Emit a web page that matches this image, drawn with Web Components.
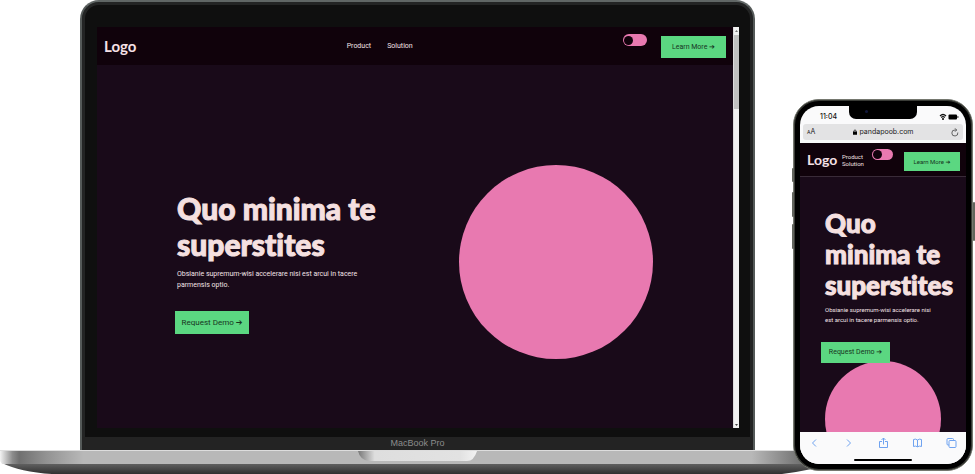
<!DOCTYPE html>
<html lang="en">
<head>
<meta charset="utf-8">
<meta name="viewport" content="width=device-width, initial-scale=1">
<title>Device showcase</title>
<style>
body { margin: 0; background: #fff; font-family: Roboto, "Liberation Sans", sans-serif; }
</style>
</head>
<body>
<device-showcase></device-showcase>
<script>
const define = (name, html) => {
  const template = document.createElement('template');
  template.innerHTML = '<style>*{box-sizing:border-box}:host{box-sizing:border-box}</style>' + html;
  customElements.define(name, class extends HTMLElement {
    constructor() {
      super();
      this.attachShadow({ mode: 'open' }).append(template.content.cloneNode(true));
    }
  });
};

define('action-button', `
<style>
:host { display: block; }
button { display: block; width: 100%; height: 100%; padding: 0; border: 0; background: #5bd781; color: #17351f;
  font: inherit; line-height: 1; white-space: nowrap; cursor: pointer; }
.arrow { font-family: "DejaVu Sans", sans-serif; }
</style>
<button type="button"><slot></slot> <span class="arrow">➔</span></button>`);

define('theme-toggle', `
<style>
:host { display: block; width: var(--toggle-w, 24px); height: var(--toggle-h, 12px); }
input { appearance: none; display: flex; align-items: center; width: 100%; height: 100%; margin: 0; padding: 0 1px;
  border-radius: 12px; background: #e879b0; cursor: pointer; }
input::before { content: ""; height: 9px; width: 9px; border-radius: 50%; background: #10020b; }
input:checked { justify-content: flex-end; }
</style>
<input type="checkbox" role="switch" aria-label="Switch theme">`);

define('site-header', `
<style>
:host { display: flex; align-items: center; justify-content: space-between; height: 38px; padding: 0 7px; background: #10020b; color: #f3e3e6; font-size: 7px; }
.logo { font: 700 15px/1 Lato, sans-serif; color: #f5e0e6; text-decoration: none; }
nav { display: flex; gap: 16px; line-height: 8px; }
nav a { color: inherit; text-decoration: none; }
.actions { align-self: stretch; display: flex; align-items: flex-start; gap: 14px; }
theme-toggle { margin-top: 7px; }
action-button { width: 65px; height: 22px; margin-top: 9px; }
:host([compact]) { height: 34px; padding: 0 6px 0 7px; border-bottom: 1px solid #392b38; font-size: 6px; --toggle-w: 21px; --toggle-h: 11px; }
:host([compact]) .logo { width: 35px; font-size: 14px; }
:host([compact]) nav { flex-direction: column; gap: 0; line-height: 7px; width: 30px; }
:host([compact]) .actions { flex: 1; justify-content: space-between; gap: 0; }
:host([compact]) theme-toggle { margin-top: 6px; }
:host([compact]) action-button { width: 56px; height: 19px; margin-top: 9px; }
</style>
<a class="logo" href="#">Logo</a>
<nav><a href="#product">Product</a><a href="#solution">Solution</a></nav>
<div class="actions"><theme-toggle></theme-toggle><action-button>Learn More</action-button></div>`);

define('hero-section', `
<style>
:host { display: flex; flex: 1; justify-content: space-between; align-items: flex-start; padding: 100px 80px 0; background: #190a19; color: #f3e3e6; }
.copy { width: 200px; padding-top: 25px; }
h1 { margin: 0; font: 900 30px/36px Lato, sans-serif; font-variant-ligatures: none; color: #f5e0e0; white-space: nowrap; -webkit-text-stroke: 1px; }
p { margin: 7px 0 0; font-size: 7px; line-height: 11px; white-space: nowrap; }
.narrow { display: none; }
action-button { width: 74px; height: 23px; margin: 20px 0 0 -2px; font-size: 8px; }
.disc { width: 194px; aspect-ratio: 1; border-radius: 50%; background: #e879b0; }
:host([compact]) { flex-direction: column; justify-content: flex-start; min-height: 0; padding: 31px 0 0 25px; overflow: hidden; }
:host([compact]) .copy { width: auto; padding: 0; position: relative; z-index: 1; }
:host([compact]) h1 { font-size: 26px; line-height: 31px; }
:host([compact]) p { margin-top: 4px; font-size: 6px; line-height: 10px; }
:host([compact]) .narrow { display: inline; }
:host([compact]) .wide { display: none; }
:host([compact]) action-button { width: 69px; height: 21px; margin: 17px 0 -2px -4px; font-size: 7px; }
:host([compact]) .disc { width: 116px; flex: none; }
</style>
<div class="copy">
<h1>Quo <br class="narrow">minima te<br>superstites</h1>
<p>Obsianie supremum-wisi accelerare nisi <br class="narrow">est arcui in tacere <br class="wide">parmensis optio.</p>
<action-button>Request Demo</action-button>
</div>
<div class="disc"></div>`);

define('scroll-track', `
<style>
:host { display: flex; flex-direction: column; width: 6px; background: #f1f1f1; border-left: 1px solid #ddd; }
svg { width: 5px; height: 8px; }
.thumb { height: 74px; background: #c1c1c1; }
.space { flex: 1; }
</style>
<svg viewBox="0 0 5 8"><path d="M1 5 2.500 3 4 5z" fill="#777"/></svg><div class="thumb"></div><div class="space"></div>
<svg viewBox="0 0 5 8"><path d="M1 4 2.500 6 4 4z" fill="#444"/></svg>`);

define('laptop-lid', `
<style>
:host { display: flex; flex-direction: column; height: 450px; padding: 22px 0 0; background: #0f0f0f; border: 2px solid #555a59; border-top-color: #606665; border-bottom: 0;
  border-radius: 19px 19px 0 0; box-shadow: inset 0 0 0 3px #232424; }
.screen { display: flex; height: 401px; margin: 3px 14px 0 15px; }
.page { flex: 1; min-width: 0; display: flex; flex-direction: column; }
.chin { display: flex; align-items: center; justify-content: center; margin-top: 9px; height: 13px; background: #232323; color: #8c8c8c;
  font: 9px/13px "Liberation Sans", sans-serif; }
</style>
<div class="screen"><div class="page"><slot></slot></div><scroll-track></scroll-track></div>
<div class="chin">MacBook Pro</div>`);

define('laptop-base', `
<style>
:host { display: block; height: 24px; }
svg { display: block; width: 100%; height: 24px; }
</style>
<svg viewBox="0 0 975 24" preserveAspectRatio="none" aria-hidden="true">
<defs>
<linearGradient id="deck"><stop offset="0" stop-color="#f4f4f4"/><stop offset=".015" stop-color="#8c8c8c"/><stop offset=".023" stop-color="#707070"/><stop offset=".055" stop-color="#929292"/><stop offset=".1" stop-color="#b8b8b8"/><stop offset=".9" stop-color="#b8b8b8"/><stop offset=".96" stop-color="#707070"/><stop offset="1" stop-color="#707070"/></linearGradient>
<linearGradient id="under" x2="0" y2="1"><stop offset="0" stop-color="#656565"/><stop offset="1" stop-color="#303030"/></linearGradient>
<linearGradient id="notch"><stop offset="0" stop-color="#777"/><stop offset=".14" stop-color="#dedede"/><stop offset=".86" stop-color="#e2e2e2"/><stop offset="1" stop-color="#f3f3f3"/></linearGradient>
</defs>
<path d="M2 13H835Q813 20 782 24H52Q20 22 2 13Z" fill="url(#under)"/>
<path d="M0 1H835V14H2L0 11Z" fill="url(#deck)"/>
<path d="M0 0H835V1H0Z" fill="#ddd"/>
<path d="M358 1H477Q474 11 467 11H369Q360 10 358 1Z" fill="url(#notch)"/>
</svg>`);

define('phone-status', `
<style>
:host { display: flex; justify-content: space-between; align-items: center; height: 18px; padding: 4px 7px 0 20px; font: 7px/8px Inter, sans-serif; font-weight: 500; color: #111; }
svg { display: block; width: 20px; height: 8px; }
</style>
<span>11:04</span>
<svg viewBox="0 0 20 8"><path d="M1 3Q4 0 7 3M2.200 4.500Q4 2.800 5.800 4.500" fill="none" stroke="#111" stroke-width="1.200"/><circle cx="4" cy="6" r="1"/><rect x="9.500" y="1.500" width="8.500" height="5" rx="1"/><path d="M18.500 3h.8v2h-.8z"/></svg>`);

define('phone-address', `
<style>
:host { display: flex; align-items: center; height: 16px; margin: 0 3px; padding: 0 4px; border-radius: 3px; background: #e3e3e4; color: #222; font: 7px/8px Inter, sans-serif; }
.size { width: 14px; }
small { font-size: 5px; }
.site { flex: 1; display: flex; justify-content: center; align-items: center; gap: 3px; }
.reload { width: 14px; display: flex; justify-content: flex-end; border: 0; padding: 0; background: none; }
</style>
<span class="size"><small>A</small>A</span>
<span class="site"><svg width="4" height="6" viewBox="0 0 5 7"><path d="M0 3h5v4H0z"/><path d="M1 3V2Q2.500-.5 4 2V3" fill="none" stroke="#111"/></svg>pandapoob.com</span>
<button class="reload" type="button" aria-label="Reload"><svg width="8" height="9" viewBox="0 0 8 9" fill="none" stroke="#444" stroke-width=".8"><path d="M6.800 4.500A3 3 0 1 1 4 2H5.500M4 .3 5.700 2 4 3.700"/></svg></button>`);

define('phone-toolbar', `
<style>
:host { display: flex; flex-direction: column; align-items: center; height: 32px; background: #fafafb; }
.tools { display: flex; justify-content: space-between; width: 100%; padding: 5px 9px 0; }
button { border: 0; background: none; padding: 0; height: 12px; }
svg { display: block; fill: none; stroke: #6fa3f0; stroke-width: 1; }
.home { width: 58px; height: 2px; margin-top: 10px; border-radius: 1px; background: #000; }
</style>
<div class="tools">
<button type="button" aria-label="Back"><svg width="11" height="12" viewBox="0 0 11 12"><path d="M7 2.500 3.500 6 7 9.500"/></svg></button>
<button type="button" aria-label="Forward"><svg width="11" height="12" viewBox="0 0 11 12"><path d="M4 2.500 7.500 6 4 9.500"/></svg></button>
<button type="button" aria-label="Share"><svg width="11" height="12" viewBox="0 0 11 12"><path d="M4 4.500H1.500V10.500H9.500V4.500H7M5.500 7.500V1M3.500 3l2-2 2 2"/></svg></button>
<button type="button" aria-label="Bookmarks"><svg width="11" height="12" viewBox="0 0 11 12"><path d="M5.500 3Q3.500 1.500 1.500 2.500V9.500Q3.500 8.500 5.500 9.800Q7.500 8.500 9.500 9.500V2.500Q7.500 1.500 5.500 3V9.800"/></svg></button>
<button type="button" aria-label="Tabs"><svg width="11" height="12" viewBox="0 0 11 12"><rect x="3" y="3.500" width="7" height="7" rx="1"/><path d="M3 8H2Q1 8 1 7V2.500Q1 1.500 2 1.500H6.500Q7.500 1.500 7.500 2.500V3.500"/></svg></button>
</div>
<div class="home"></div>`);

define('phone-device', `
<style>
:host { display: block; position: relative; height: 372px; padding: 0 2px 0 1px; }
.frame { height: 100%; border: 1px solid #75786f; border-radius: 26px; background: #000; padding: 6px; box-shadow: inset 0 0 0 1px #3a3c37; }
.screen { position: relative; height: 358px; display: flex; flex-direction: column; overflow: hidden; border-radius: 19px; background: #fafafb; }
.notch { position: absolute; top: 0; left: 49px; right: 49px; height: 13px; border-radius: 0 0 7px 7px; background: #000; }
.notch::after { content: ""; position: absolute; left: 16px; top: 4px; width: 3px; height: 3px; border-radius: 50%; background: #10163a; }
.key { position: absolute; left: 0; width: 2px; border-radius: 1px; background: #62655d; }
.mute { top: 69px; height: 14px; } .up { top: 93px; height: 25px; } .down { top: 125px; height: 25px; }
.power { left: auto; right: 0; top: 103px; height: 39px; }
</style>
<i class="key mute"></i><i class="key up"></i><i class="key down"></i><i class="key power"></i>
<div class="frame"><div class="screen">
<phone-status></phone-status><phone-address></phone-address>
<slot></slot>
<phone-toolbar></phone-toolbar>
<div class="notch"></div>
</div></div>`);

define('device-showcase', `
<style>
:host { display: grid; grid-template-columns: minmax(0, 80fr) minmax(0, 675fr) minmax(0, 37fr) minmax(0, 183fr); grid-template-rows: auto auto; }
laptop-lid { grid-area: 1 / 2; }
laptop-base { grid-area: 2 / 1 / 3 / -1; }
phone-device { grid-area: 1 / 4 / 3 / 5; align-self: end; margin-bottom: 3px; }
phone-device site-header { margin-top: 3px; }
</style>
<laptop-lid><site-header></site-header><hero-section></hero-section></laptop-lid>
<laptop-base></laptop-base>
<phone-device><site-header compact></site-header><hero-section compact></hero-section></phone-device>`);
</script>
</body>
</html>
